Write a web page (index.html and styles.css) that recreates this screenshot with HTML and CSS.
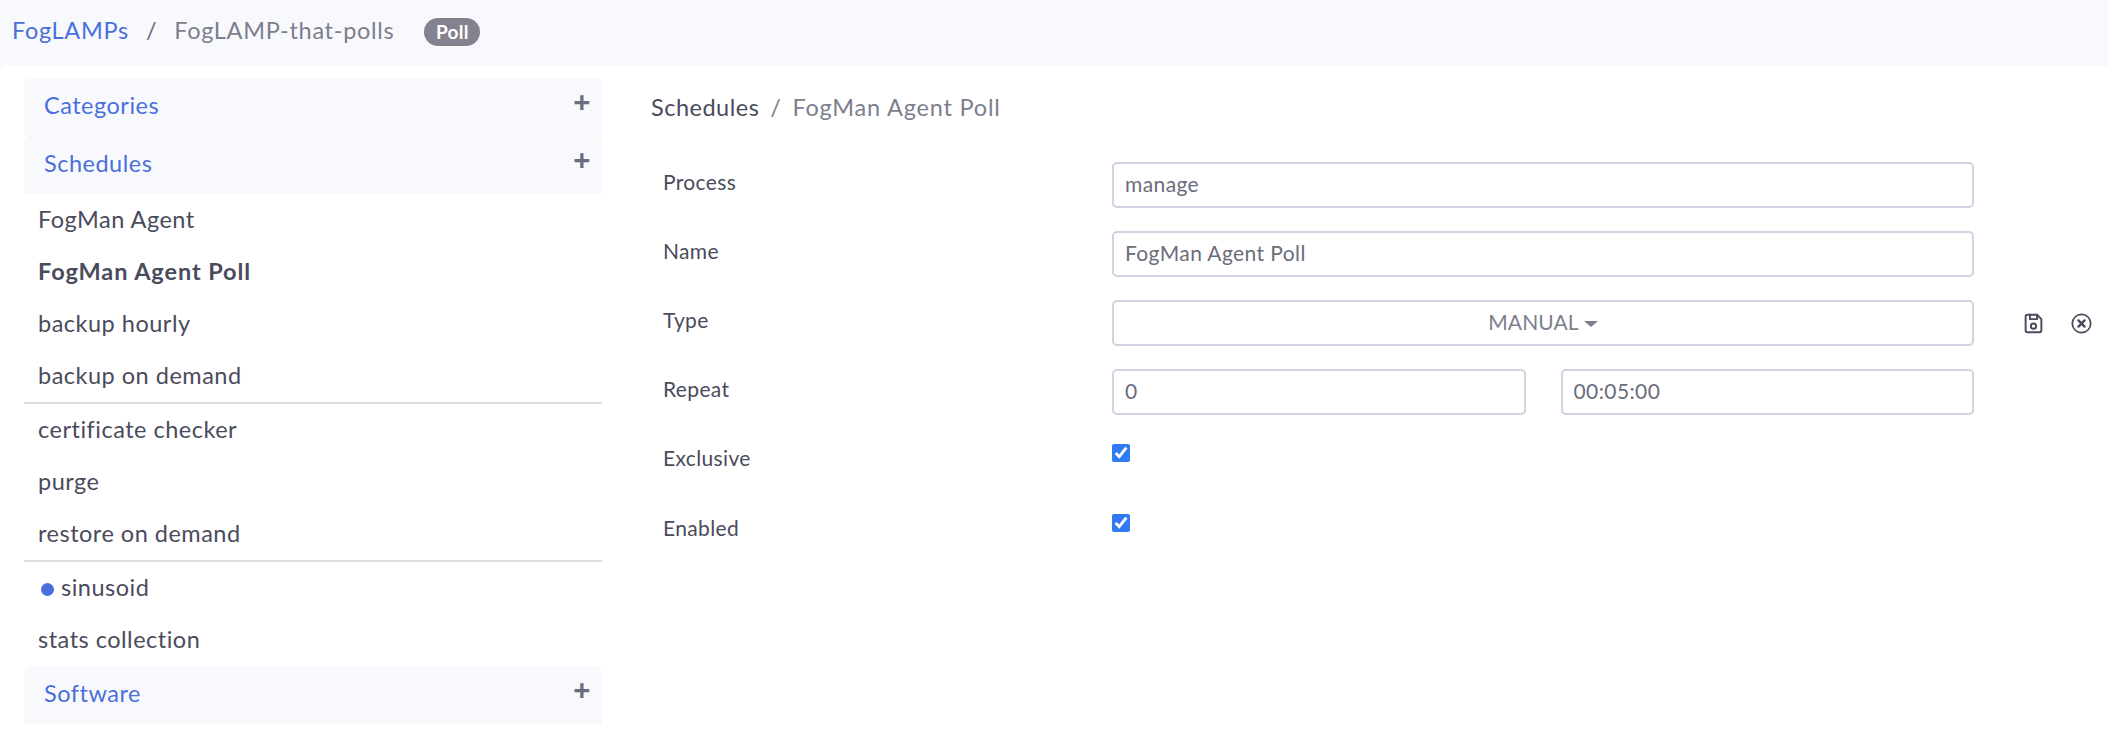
FILE: index.html
```html
<!DOCTYPE html>
<html lang="en">
<head>
  <meta charset="UTF-8">
  <title>FogLAMP-that-polls</title>
  <link rel="stylesheet" href="styles.css">
</head>
<body>
  <div class="topbar">
    <a class="crumb-link">FogLAMPs</a>
    <span class="crumb-sep">/</span>
    <span class="crumb-current">FogLAMP-that-polls</span>
    <span class="badge">Poll</span>
  </div>

  <div class="main">
    <div class="sidebar">
      <div class="panel-head first"><span>Categories</span><span class="plus">+</span></div>
      <div class="panel-head"><span>Schedules</span><span class="plus">+</span></div>
      <div class="item">FogMan Agent</div>
      <div class="item active">FogMan Agent Poll</div>
      <div class="item">backup hourly</div>
      <div class="item last">backup on demand</div>
      <div class="item">certificate checker</div>
      <div class="item">purge</div>
      <div class="item last">restore on demand</div>
      <div class="item"><span class="dot"></span>sinusoid</div>
      <div class="item">stats collection</div>
      <div class="panel-head software"><span>Software</span><span class="plus">+</span></div>
    </div>

    <div class="content">
      <div class="content-title"><span class="title-parent">Schedules</span><span class="title-sep">/</span><span class="title-current">FogMan Agent Poll</span></div>
      <div class="form">
        <div class="row">
          <label class="label">Process</label>
          <div class="field"><input class="input" value="manage"></div>
        </div>
        <div class="row">
          <label class="label">Name</label>
          <div class="field"><input class="input" value="FogMan Agent Poll"></div>
        </div>
        <div class="row">
          <label class="label">Type</label>
          <div class="field"><button class="select">MANUAL<span class="caret"></span></button></div>
          <div class="actions">
            <svg class="icon save" viewBox="0 0 24 24" fill="none" stroke="#4a4b5c" stroke-width="2.2" stroke-linecap="round" stroke-linejoin="round">
              <path d="M19 22H5a2 2 0 0 1-2-2V4a2 2 0 0 1 2-2h11l5 5v13a2 2 0 0 1-2 2z"/>
              <path d="M8 2v5h8V2"/>
              <circle cx="12" cy="15" r="3"/>
            </svg>
            <svg class="icon" viewBox="0 0 24 24" fill="none" stroke="#4a4b5c" stroke-width="2" stroke-linecap="round">
              <circle cx="12" cy="12" r="10.5"/>
              <path d="M15.5 8.5l-7 7M8.5 8.5l7 7" stroke-width="2.8"/>
            </svg>
          </div>
        </div>
        <div class="row">
          <label class="label">Repeat</label>
          <div class="field split"><input class="input" value="0"><input class="input" value="00:05:00"></div>
        </div>
        <div class="row check-row">
          <label class="label">Exclusive</label>
          <div class="field"><input class="check" type="checkbox" checked></div>
        </div>
        <div class="row check-row">
          <label class="label">Enabled</label>
          <div class="field"><input class="check" type="checkbox" checked></div>
        </div>
      </div>
    </div>
  </div>
</body>
</html>
```

FILE: styles.css
```css
* {
  box-sizing: border-box;
}

body {
  margin: 0;
  height: 734px;
  overflow: hidden;
  background-color: #f8f9fd;
  font-family: Lato, sans-serif;
  font-size: 23.5px;
  letter-spacing: 0.5px;
  color: #4a4b5c;
}

.topbar {
  height: 66px;
  display: flex;
  align-items: center;
  padding: 0 0 6px 12px;
  letter-spacing: 0.7px;
}

.crumb-link {
  color: #4a6fdc;
}

.crumb-sep {
  margin: 0 17px;
  color: #6b6c7c;
}

.crumb-current {
  color: #7d7e8e;
}

.badge {
  margin-left: 30px;
  margin-top: 4px;
  width: 56px;
  height: 28px;
  line-height: 28px;
  text-align: center;
  border-radius: 14px;
  background-color: #82838f;
  color: #fff;
  font-size: 19px;
  font-weight: 700;
  letter-spacing: 0.3px;
}

.main {
  height: 668px;
  display: flex;
  background-color: #fff;
  border-top-left-radius: 6px;
}

.sidebar {
  width: 578px;
  margin: 12px 0 0 24px;
  flex-shrink: 0;
}

.panel-head {
  height: 58px;
  display: flex;
  justify-content: space-between;
  align-items: center;
  padding: 0 11px 4px 20px;
  background-color: #f8f9fd;
  border-radius: 6px 6px 0 0;
  color: #4a6fdc;
}

.plus {
  font-family: "Noto Sans", sans-serif;
  font-size: 30px;
  font-weight: 700;
  color: #6b6c7c;
  line-height: 1;
  margin-top: -6px;
}

.item {
  height: 52px;
  line-height: 50px;
  padding-left: 14px;
}

.item.active {
  font-weight: 700;
  letter-spacing: 0.9px;
}

.item.last {
  height: 54px;
  border-bottom: 2px solid #dcdde2;
}

.dot {
  display: inline-block;
  width: 13px;
  height: 13px;
  margin: 0 7px 0 3px;
  border-radius: 50%;
  background-color: #4a6fdc;
}

.content {
  flex: 1;
  padding: 0 0 0 49px;
}

.content-title {
  height: 82px;
  padding-top: 24px;
  line-height: 34px;
}

.title-sep {
  margin: 0 11px;
  color: #7d7e8e;
}

.title-current {
  color: #7d7e8e;
  letter-spacing: 0.8px;
}

.form {
  padding-left: 12px;
  margin-top: 14px;
}

.row {
  display: flex;
  height: 46px;
  margin-bottom: 23px;
}

.check-row {
  height: 47px;
}

.label {
  width: 449px;
  flex-shrink: 0;
  line-height: 40px;
  font-size: 21px;
  letter-spacing: 0.35px;
}

.field {
  width: 862px;
  flex-shrink: 0;
}

.split {
  display: flex;
  gap: 35px;
}

.input, .select {
  width: 100%;
  height: 46px;
  border: 2px solid #d0d2e2;
  border-radius: 5px;
  background-color: #fff;
  padding: 0 11px 3px;
  font-family: inherit;
  font-size: 21px;
  letter-spacing: 0.4px;
  color: #6b6c7c;
}

.select {
  text-align: center;
  letter-spacing: 0.1px;
  color: #7d7e8e;
}

.caret {
  display: inline-block;
  margin-left: 5px;
  vertical-align: 3px;
  border-top: 6px solid #7d7e8e;
  border-left: 7px solid transparent;
  border-right: 7px solid transparent;
}

.actions {
  display: flex;
  gap: 27px;
  margin-left: 49px;
  align-items: center;
}

.icon {
  width: 21px;
  height: 21px;
}

.check {
  width: 18px;
  height: 18px;
  margin: 6px 0 0 0;
  accent-color: #2f7bf5;
}
```
